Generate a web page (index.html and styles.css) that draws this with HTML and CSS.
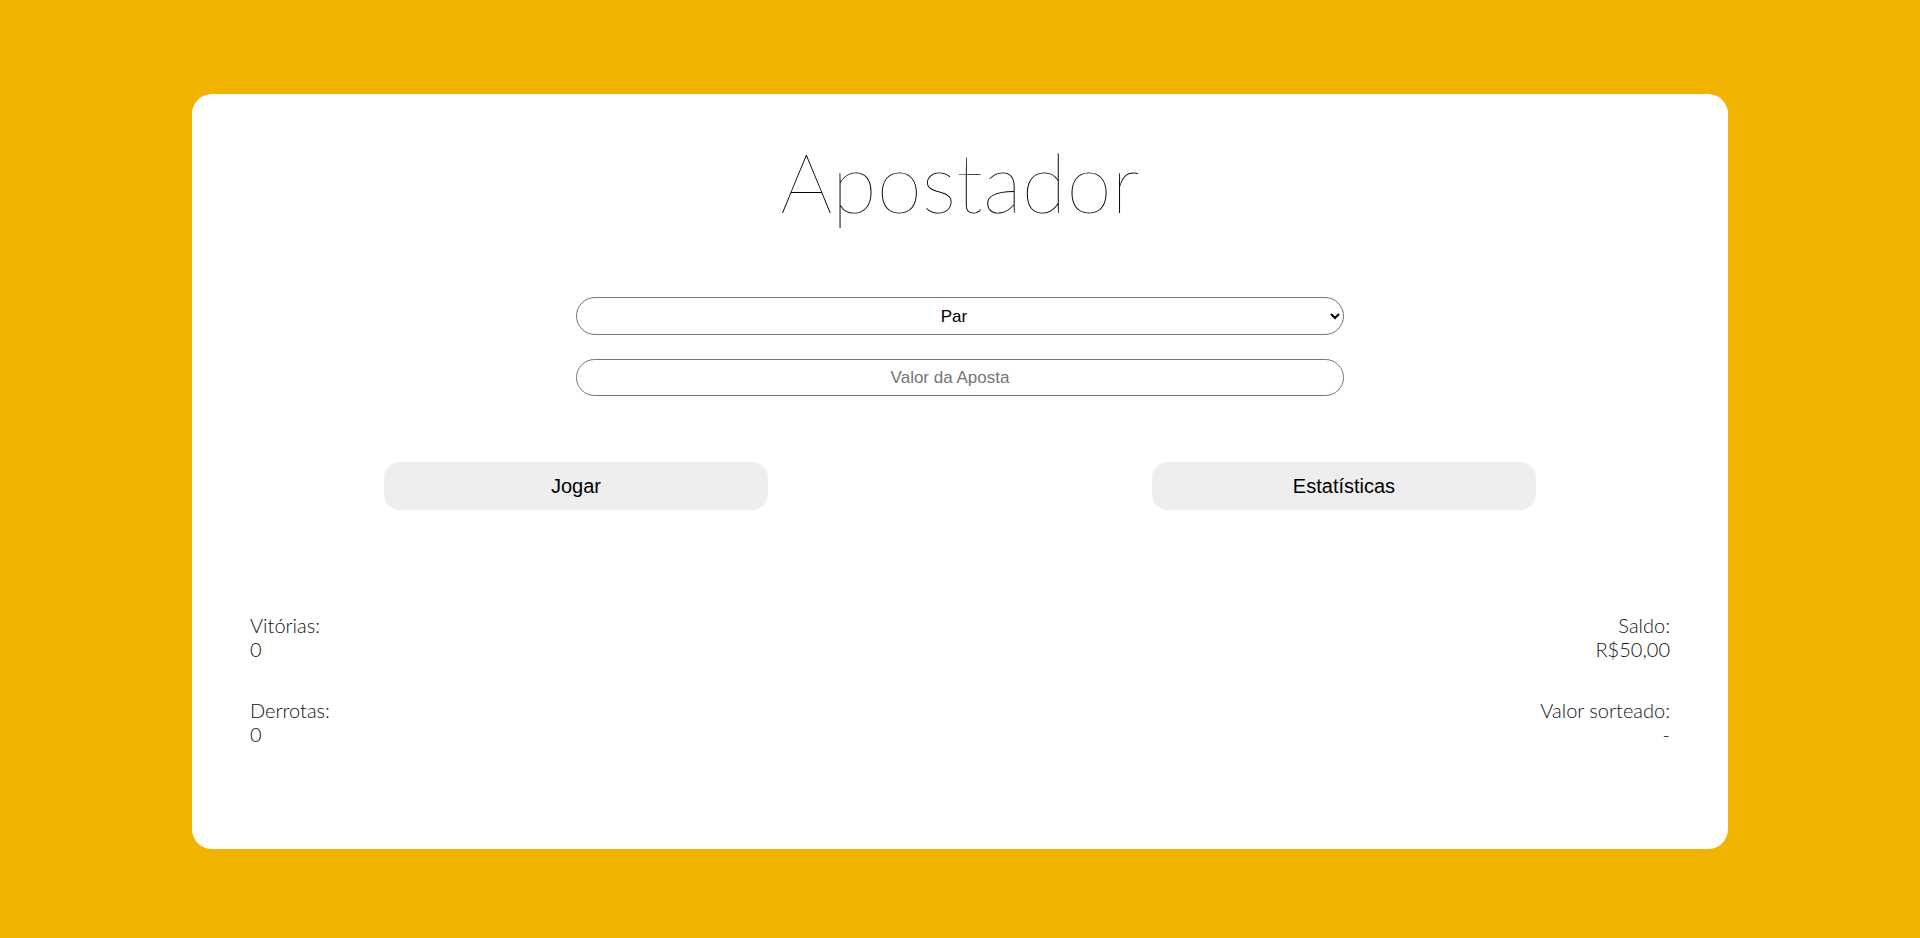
FILE: index.html
```html
<!DOCTYPE html>
<html lang="pt-BR">
<head>
<meta charset="utf-8">
<title>Apostador</title>
<link rel="stylesheet" href="styles.css">
</head>
<body>
<main class="card">
  <h1 class="title">Apostador</h1>
  <div class="form">
    <select class="field field-select">
      <option>Par</option>
      <option>Ímpar</option>
    </select>
    <input class="field field-input" type="text" placeholder="Valor da Aposta">
  </div>
  <div class="actions">
    <button class="btn">Jogar</button>
    <button class="btn">Estatísticas</button>
  </div>
  <div class="stats">
    <div class="stats-col">
      <div class="stat">
        <div>Vitórias:</div>
        <div>0</div>
      </div>
      <div class="stat">
        <div>Derrotas:</div>
        <div>0</div>
      </div>
    </div>
    <div class="stats-col stats-right">
      <div class="stat">
        <div>Saldo:</div>
        <div>R$50,00</div>
      </div>
      <div class="stat">
        <div>Valor sorteado:</div>
        <div>-</div>
      </div>
    </div>
  </div>
</main>
</body>
</html>
```

FILE: styles.css
```css
html, body {
  margin: 0;
  padding: 0;
}

body {
  background: #f0b300;
  min-height: 938px;
  padding-top: 94px;
  box-sizing: border-box;
}

.card {
  width: 1536px;
  margin: 0 auto;
  background: #ffffff;
  border-radius: 20px;
  padding: 39px 0 103px;
  box-sizing: border-box;
}

.title {
  margin: 0;
  text-align: center;
  font-family: "Lato", sans-serif;
  font-weight: 100;
  font-size: 82px;
  line-height: 96px;
  color: #000;
}

.form {
  width: 768px;
  margin: 68px auto 0;
  display: flex;
  flex-direction: column;
  gap: 24px;
}

.field {
  width: 100%;
  box-sizing: border-box;
  border: 1px solid #767676;
  border-radius: 19px;
  background: #fff;
  font-family: "Liberation Sans", Arial, sans-serif;
  font-size: 17px;
  color: #000;
  text-align: center;
  outline: none;
}

.field-select {
  height: 38px;
  text-align-last: center;
  padding: 0 8px 0 8px;
}

.field-input {
  height: 37px;
  padding: 0 24px 0 4px;
}

.field-input::placeholder {
  color: #757575;
}

.actions {
  margin-top: 66px;
  display: flex;
  justify-content: space-around;
}

.btn {
  width: 384px;
  height: 48px;
  border: none;
  border-radius: 16px;
  background: #eeeeee;
  font-family: "Liberation Sans", Arial, sans-serif;
  font-size: 20px;
  color: #000;
  cursor: pointer;
}

.stats {
  margin-top: 103px;
  padding: 0 58px;
  display: flex;
  justify-content: space-between;
  font-family: "Lato", sans-serif;
  font-weight: 300;
  font-size: 20px;
  line-height: 24px;
  color: #111;
}

.stats-col {
  display: flex;
  flex-direction: column;
  gap: 37px;
}

.stats-right {
  text-align: right;
}
```
